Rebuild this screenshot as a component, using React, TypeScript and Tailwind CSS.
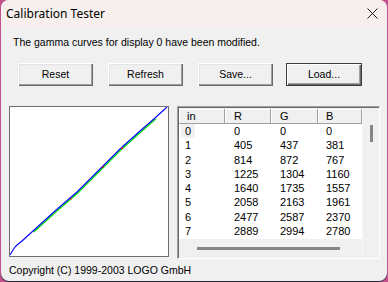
import React from "react";

const rows: [string, string, string, string][] = [
  ["0", "0", "0", "0"],
  ["1", "405", "437", "381"],
  ["2", "814", "872", "767"],
  ["3", "1225", "1304", "1160"],
  ["4", "1640", "1735", "1557"],
  ["5", "2058", "2163", "1961"],
  ["6", "2477", "2587", "2370"],
  ["7", "2889", "2994", "2780"],
];

function Btn({ label, def }: { label: string; def?: boolean }) {
  return (
    <div
      className={
        "h-[23px] flex items-center justify-center bg-[#f0f0f0] text-[10.5px] text-black " +
        (def
          ? "w-[76px] border border-[#3c3c3c] shadow-[inset_1px_1px_0_#ffffff,inset_-1px_-1px_0_#696969,inset_-2px_-2px_0_#a0a0a0]"
          : "w-[75px] shadow-[inset_1px_1px_0_#ffffff,inset_-1px_-1px_0_#696969,inset_-2px_-2px_0_#a0a0a0,inset_2px_2px_0_#e3e3e3]")
      }
    >
      {label}
    </div>
  );
}

function Curve() {
  const pts: [number, number][] = [
    [0, 148],
    [1.5, 145.5],
    [3, 143],
    [5, 140],
    [7, 138],
    [12, 134],
    [23, 124],
    [45, 104],
    [67, 85],
    [90, 62],
    [110, 42],
    [130, 24],
    [145, 11],
    [157, 0],
  ];
  const d = pts.map((p) => p.join(",")).join(" ");
  const dg = pts
    .filter((p) => p[0] >= 23 && p[0] <= 145)
    .map((p) => `${p[0] + 0.8},${p[1] + 1}`)
    .join(" ");
  return (
    <svg width="158" height="149" viewBox="0 0 158 149" className="block">
      <polyline points={dg} fill="none" stroke="#00e000" strokeWidth="1.2" />
      <polyline points={d} fill="none" stroke="#0000ff" strokeWidth="1.1" />
      <rect x="111" y="40.5" width="2" height="1.5" fill="#ff0000" />
      <rect x="92" y="59.5" width="1.5" height="1.5" fill="#ff0000" />
      <rect x="60" y="91" width="1.5" height="1.5" fill="#ff0000" />
    </svg>
  );
}

export default function App() {
  const font = { fontFamily: '"Liberation Sans", Arial, sans-serif' };
  return (
    <div className="w-[388px] h-[282px] bg-[#c2508a] overflow-hidden">
      <div
        className="ml-[1px] w-[386px] h-[281px] rounded-[8px] overflow-hidden bg-[#f0f0f0] flex flex-col shadow-[0_1px_0_#2a2535]"
        style={font}
      >
        {/* title bar */}
        <div className="h-[27px] bg-[#f6efed] flex items-center justify-between pl-[5px] pr-[9px]">
          <span
            className="text-[12px] text-black"
            style={{ fontFamily: '"Noto Sans", "Open Sans", sans-serif' }}
          >
            Calibration Tester
          </span>
          <svg width="11" height="11" viewBox="0 0 11 11">
            <path d="M0.5 0.5 L10.5 10.5 M10.5 0.5 L0.5 10.5" stroke="#1a1a1a" strokeWidth="1" />
          </svg>
        </div>

        {/* message */}
        <div className="pl-[12px] pt-[9px] h-[36px] text-[10.5px] leading-[13px] text-black">
          The gamma curves for display 0 have been modified.
        </div>

        {/* buttons */}
        <div className="flex pl-[17px] h-[23px]">
          <Btn label="Reset" />
          <div className="w-[15px]" />
          <Btn label="Refresh" />
          <div className="w-[15px]" />
          <Btn label="Save..." />
          <div className="w-[13px]" />
          <Btn label="Load..." def />
        </div>

        {/* content */}
        <div className="flex pl-[8px] mt-[20px]">
          <div className="w-[160px] h-[151px] border border-[#6e6e6e] bg-white">
            <Curve />
          </div>
          <div className="ml-[8px] w-[203px] h-[153px] border-t border-l border-[#a0a0a0] border-r border-b border-r-white border-b-white bg-[#f0f0f0] flex flex-col text-[11px] text-black">
            <div className="flex flex-1 border-t border-l border-t-[#696969] border-l-[#696969]">
              <div className="flex flex-col w-[183px]">
                {/* header */}
                <div className="flex h-[15px] leading-[14px] mt-[1px]">
                  <div className="w-[46px] pl-[8px] bg-[#f0f0f0] shadow-[inset_-1px_-1px_0_#a0a0a0,inset_1px_1px_0_#ffffff]">in</div>
                  <div className="w-[46px] pl-[9px] bg-[#f0f0f0] shadow-[inset_-1px_-1px_0_#a0a0a0,inset_1px_1px_0_#ffffff]">R</div>
                  <div className="w-[47px] pl-[9px] bg-[#f0f0f0] shadow-[inset_-1px_-1px_0_#a0a0a0,inset_1px_1px_0_#ffffff]">G</div>
                  <div className="w-[44px] pl-[8px] bg-[#f0f0f0] shadow-[inset_-1px_-1px_0_#a0a0a0,inset_1px_1px_0_#ffffff]">B</div>
                </div>
                {/* rows */}
                <div className="bg-white h-[115px]">
                  {rows.map((r, i) => (
                    <div key={i} className="flex h-[14.3px] leading-[14.3px]">
                      <div className="w-[46px] pl-[2px]">
                        <span className={"inline-block px-[4px] " + (i === 0 ? "bg-[#f0f0f0]" : "")}>{r[0]}</span>
                      </div>
                      <div className="w-[46px] pl-[9px]">{r[1]}</div>
                      <div className="w-[47px] pl-[9px]">{r[2]}</div>
                      <div className="w-[44px] pl-[8px]">{r[3]}</div>
                    </div>
                  ))}
                </div>
                {/* horizontal scrollbar */}
                <div className="flex-1 flex items-center pl-[18px]">
                  <div className="w-[143px] h-[3px] bg-[#858585]" />
                </div>
              </div>
              {/* vertical scrollbar */}
              <div className="w-[17px] border-l border-l-[#f7f7f7] flex justify-center pt-[17px]">
                <div className="w-[3px] h-[17px] bg-[#858585] ml-[1px]" />
              </div>
            </div>
          </div>
        </div>

        {/* copyright */}
        <div className="pl-[8px] mt-[5px] text-[10.5px] leading-[13px] text-black">
          Copyright (C) 1999-2003 LOGO GmbH
        </div>
      </div>
    </div>
  );
}
